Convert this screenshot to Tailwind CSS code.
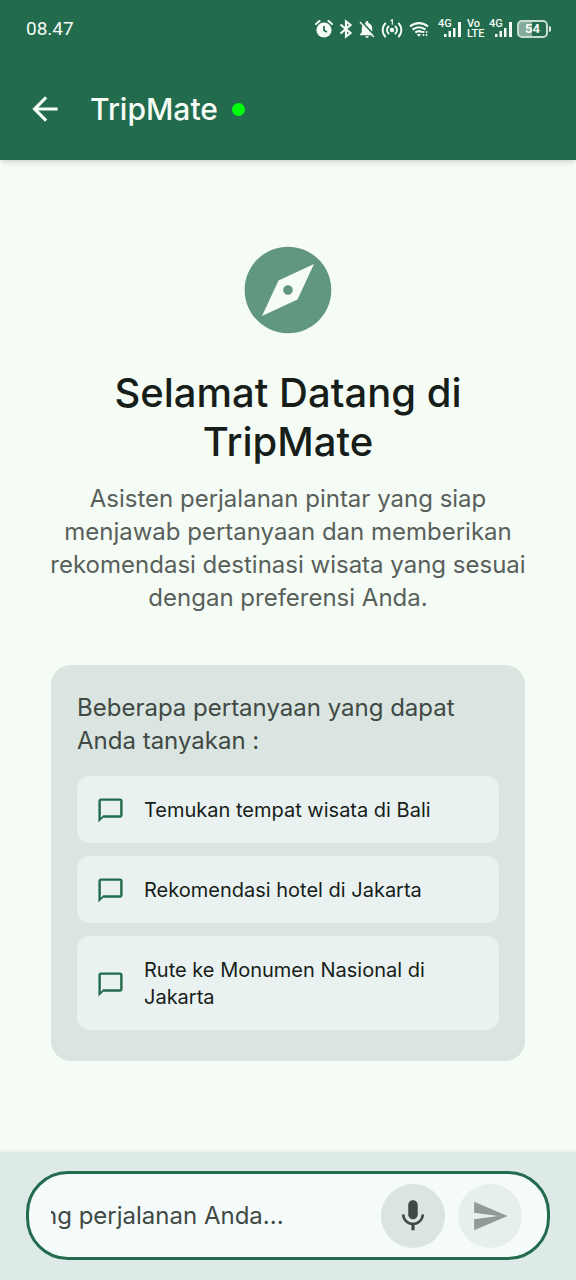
<!DOCTYPE html>
<html lang="id">
<head>
<meta charset="utf-8">
<meta name="viewport" content="width=device-width, initial-scale=1">
<title>TripMate</title>
<script src="https://cdn.jsdelivr.net/npm/@tailwindcss/browser@4"></script>
</head>
<body class="flex min-h-screen flex-col bg-[#f5fcf5] font-['Inter','Liberation_Sans',sans-serif] text-[#171d19]">

<header class="relative bg-[#226b4d] text-[#f5fcf5] shadow-md">
  <!-- System status bar -->
  <div class="flex h-[58px] items-center justify-between pr-[25px] pl-[26px]">
    <time class="font-['Roboto',sans-serif] text-[19px]">08.47</time>
    <div class="flex items-center font-['Roboto',sans-serif]">
      <svg class="h-5 w-[18px]" viewBox="0 0 18 20" fill="none" aria-label="Alarm"><circle cx="9" cy="11" r="7.6" fill="currentColor"/><path d="M1 5 4.500 2M17 5 13.500 2" stroke="currentColor" stroke-width="2" stroke-linecap="round"/><path d="M9 7v4.500l3 1.500" stroke="#226b4d" stroke-width="1.700"/></svg>
      <svg class="ml-[6px] h-5 w-[14px]" viewBox="0 0 14 20" fill="none" stroke="currentColor" stroke-width="2.200" aria-label="Bluetooth"><path d="m1.500 5.500 10 8.500L7 17.500v-15L11.500 6l-10 8.500"/></svg>
      <svg class="ml-[6px] h-5 w-4" viewBox="0 0 16 20" fill="currentColor" aria-label="Senyap"><path d="M8 2c.8 0 1.300.6 1.300 1.300v.6c2.500.6 3.900 2.700 3.900 5.300v4l1.800 2v1H1v-1l1.800-2v-4C2.800 6.600 4.200 4.500 6.700 3.900v-.6C6.700 2.600 7.200 2 8 2ZM6.200 17.200h3.600a1.800 1.800 0 0 1-3.600 0Z"/><path d="M2.200 2 16 17" stroke="#226b4d" stroke-width="1.800"/><path d="M1 3 14.800 18" stroke="currentColor" stroke-width="1.400"/></svg>
      <svg class="ml-[6px] h-5 w-[22px]" viewBox="0 0 22 20" fill="none" stroke="currentColor" stroke-width="2" stroke-linecap="round" aria-label="Hotspot"><circle cx="11" cy="11" r="1.300" fill="currentColor"/><path d="M7.500 7.500a5 5 0 0 0 0 7M14.500 7.500a5 5 0 0 1 0 7M4.200 4.500a9.500 9.500 0 0 0 0 13M17.800 4.500a9.500 9.500 0 0 1 0 13"/><path d="m10 1.500 1.300-.7v4.400" stroke-width="1.200"/></svg>
      <svg class="ml-[6px] h-5 w-[20px]" viewBox="0 0 20 20" fill="none" stroke="currentColor" stroke-width="2.200" aria-label="Wi-Fi"><path d="M1 7.500c5.300-4.600 12.700-4.600 18 0M3.600 10.700c3.900-3.300 8.900-3.300 12.800 0M6.300 13.700c2.300-2 5.100-2 7.200-.2"/><path d="m7.800 15.300 2.200 2.500 2-2.300q-2.100-1.600-4.200-.2Z" fill="currentColor" stroke="none"/><path d="M14.500 12v6M17.500 12v6" stroke-width="1.500" stroke-dasharray="2 1"/></svg>
      <div class="relative ml-[9px] h-5 w-6" aria-label="Sinyal 4G">
        <span class="absolute -top-px left-0 text-[11px] leading-[11px] font-medium">4G</span>
        <svg class="h-5 w-6" viewBox="0 0 24 20" fill="currentColor"><path d="M6 15h2.500v3H6zM10.500 12H13v6h-2.500zM15 9h2.500v9H15zM20 3h3v15h-3z"/></svg>
      </div>
      <div class="ml-[5px] flex w-[17px] flex-col text-[11px] leading-[10px] font-medium"><span>Vo</span><span>LTE</span></div>
      <div class="relative ml-[5px] h-5 w-6" aria-label="Sinyal 4G">
        <span class="absolute -top-px left-0 text-[11px] leading-[11px] font-medium">4G</span>
        <svg class="h-5 w-6" viewBox="0 0 24 20" fill="currentColor"><path d="M6 15h2.500v3H6zM10.500 12H13v6h-2.500zM15 9h2.500v9H15zM20 3h3v15h-3z"/></svg>
      </div>
      <div class="ml-1 flex items-center">
        <span class="flex h-[18px] w-[31px] items-center justify-center rounded-[5px] border-2 border-[#c8dcd0] bg-linear-to-r from-[#84ab99] from-50% to-transparent to-50% text-[13px] font-bold">54</span>
        <span class="ml-px h-[6px] w-[2px] rounded-r bg-[#dcebe1]"></span>
      </div>
    </div>
  </div>
  <!-- App bar -->
  <div class="flex h-[102px] items-center pl-[26px]">
    <button type="button" aria-label="Kembali" class="mr-[26px]">
      <svg class="size-[38px]" viewBox="0 0 24 24" fill="currentColor"><path d="M20 11H7.830l5.590-5.590L12 4l-8 8 8 8 1.410-1.410L7.830 13H20v-2z"/></svg>
    </button>
    <h1 class="text-[30px] font-medium">TripMate</h1>
    <span class="ml-[14px] size-[13px] rounded-full bg-[#00ff0a]" role="img" aria-label="Daring"></span>
  </div>
</header>

<main class="flex flex-1 flex-col items-center px-[40px] pt-[78px] pb-20">
  <svg class="size-[104px] text-[#61967f]" viewBox="0 0 24 24" fill="currentColor" aria-hidden="true"><path d="M12 10.900c-.610 0-1.100.490-1.100 1.100s.490 1.100 1.100 1.100c.610 0 1.100-.490 1.100-1.100s-.490-1.100-1.100-1.100zM12 2C6.480 2 2 6.480 2 12s4.480 10 10 10 10-4.480 10-10S17.520 2 12 2zm2.190 12.190L6 18l3.810-8.190L18 6l-3.810 8.190z"/></svg>
  <h2 class="mt-[26px] text-center text-[40px] leading-[49px] font-medium">Selamat Datang di<br>TripMate</h2>
  <p class="mt-4 text-center text-[24px] leading-[33px] text-[#59605b]">Asisten perjalanan pintar yang siap<br>menjawab pertanyaan dan memberikan<br>rekomendasi destinasi wisata yang sesuai<br>dengan preferensi Anda.</p>

  <section class="mt-[51px] w-full max-w-[474px] rounded-[20px] bg-[#dae4e0] px-[26px] pt-[26px] pb-[31px]">
    <h3 class="text-[24px] leading-[33px] text-[#404944]">Beberapa pertanyaan yang dapat<br>Anda tanyakan :</h3>
    <div class="mt-[19px] flex flex-col gap-[13px]">
      <button type="button" class="flex items-center gap-[19px] rounded-[13px] bg-[#e9f2f1] px-[19px] pt-[21px] pb-[19px] text-left text-[20px] leading-[27px]">
        <svg class="size-[29px] -my-px shrink-0 text-[#226b4d]" viewBox="0 0 24 24" fill="currentColor" aria-hidden="true"><path d="M20 2H4c-1.100 0-2 .9-2 2v18l4-4h14c1.100 0 2-.9 2-2V4c0-1.100-.9-2-2-2zm0 14H6l-2 2V4h16v12z"/></svg>
        <span>Temukan tempat wisata di Bali</span>
      </button>
      <button type="button" class="flex items-center gap-[19px] rounded-[13px] bg-[#e9f2f1] px-[19px] pt-[21px] pb-[19px] text-left text-[20px] leading-[27px]">
        <svg class="size-[29px] -my-px shrink-0 text-[#226b4d]" viewBox="0 0 24 24" fill="currentColor" aria-hidden="true"><path d="M20 2H4c-1.100 0-2 .9-2 2v18l4-4h14c1.100 0 2-.9 2-2V4c0-1.100-.9-2-2-2zm0 14H6l-2 2V4h16v12z"/></svg>
        <span>Rekomendasi hotel di Jakarta</span>
      </button>
      <button type="button" class="flex items-center gap-[19px] rounded-[13px] bg-[#e9f2f1] px-[19px] pt-[21px] pb-[19px] text-left text-[20px] leading-[27px]">
        <svg class="size-[29px] -my-px shrink-0 text-[#226b4d]" viewBox="0 0 24 24" fill="currentColor" aria-hidden="true"><path d="M20 2H4c-1.100 0-2 .9-2 2v18l4-4h14c1.100 0 2-.9 2-2V4c0-1.100-.9-2-2-2zm0 14H6l-2 2V4h16v12z"/></svg>
        <span>Rute ke Monumen Nasional di<br>Jakarta</span>
      </button>
    </div>
  </section>
</main>

<footer class="bg-[#deeae7] px-[26px] pt-[19px] pb-5 shadow-[0_-1px_4px_rgba(0,0,0,0.06)]">
  <form class="flex items-center gap-[13px] rounded-[42px] border-3 border-[#226b4d] bg-[#f5fbfa] pt-[10px] pr-[25px] pb-[9px] pl-[22px]">
    <label for="message" class="sr-only">Pesan</label>
    <input id="message" type="text" placeholder="ng perjalanan Anda..." class="h-[33px] min-w-0 flex-1 -indent-[8px] text-[24px] text-[#404944] outline-none placeholder:text-[#404944]">
    <button type="button" aria-label="Rekam suara" class="flex size-16 shrink-0 items-center justify-center rounded-full bg-[#dae4e0] text-[#404944]">
      <svg class="size-[38px]" viewBox="0 0 24 24" fill="currentColor"><path d="M12 14c1.660 0 2.990-1.340 2.990-3L15 5c0-1.660-1.340-3-3-3S9 3.340 9 5v6c0 1.660 1.340 3 3 3zm5.300-3c0 3-2.540 5.100-5.300 5.100S6.700 14 6.700 11H5c0 3.410 2.720 6.230 6 6.720V21h2v-3.280c3.280-.480 6-3.300 6-6.720h-1.700z"/></svg>
    </button>
    <button type="submit" aria-label="Kirim" class="flex size-16 shrink-0 items-center justify-center rounded-full bg-[#e7efee] text-[#929a97]">
      <svg class="size-[38px]" viewBox="0 0 24 24" fill="currentColor"><path d="M2.010 21 23 12 2.010 3 2 10l15 2-15 2z"/></svg>
    </button>
  </form>
</footer>
</body>
</html>
